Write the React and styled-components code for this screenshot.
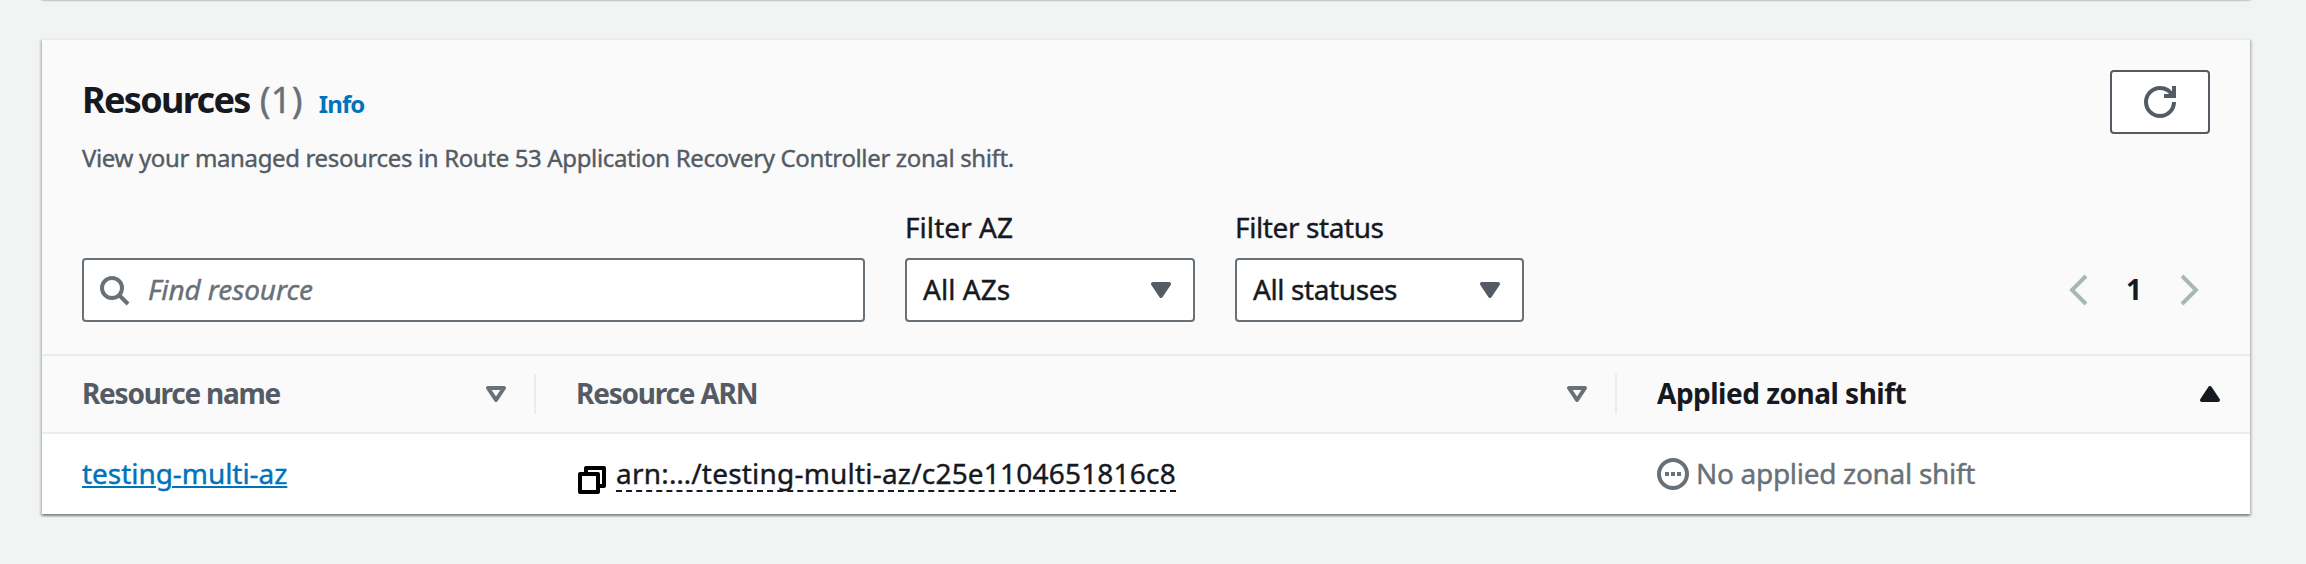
import React from "react";
import styled, { createGlobalStyle, css } from "styled-components";

const color = {
  page: "#f2f3f3",
  header: "#fafafa",
  surface: "#ffffff",
  divider: "#eaeded",
  text: "#16191f",
  textSecondary: "#545b64",
  textMuted: "#687078",
  link: "#0073bb",
  disabled: "#aab7b8",
};

const bold = css`
  font-weight: 700;
  -webkit-text-stroke-width: 0;
`;

const GlobalStyle = createGlobalStyle`
  *, *::before, *::after { box-sizing: border-box; }
  body {
    margin: 0;
    overflow: hidden;
    background: ${color.page};
    color: ${color.text};
    font-family: "Noto Sans", "Open Sans", sans-serif;
    font-size: 28px;
    line-height: 44px;
    -webkit-text-stroke-width: 0.4px;
  }
`;

const Page = styled.main`
  display: flex;
  flex-direction: column;
  gap: 40px;
  height: 564px;
  padding: 0 56px 0 42px;
  overflow: hidden;
`;

const Panel = styled.section`
  background: ${color.surface};
  border-top: 2px solid ${color.divider};
  box-shadow:
    0 2px 2px 0 rgba(0, 28, 36, 0.3),
    2px 2px 2px 0 rgba(0, 28, 36, 0.15),
    -2px 2px 2px 0 rgba(0, 28, 36, 0.15);
`;

const PreviousPanel = styled(Panel)`
  flex: none;
  height: 20px;
  margin-top: -22px;
`;

const PanelHeader = styled.header`
  height: 314px;
  padding: 30px 40px 0;
  background: ${color.header};
`;

const TitleBar = styled.div`
  display: flex;
  justify-content: space-between;
  align-items: flex-start;
  height: 135px;
`;

const Heading = styled.div`
  padding-top: 8px;
`;

const TitleLine = styled.div`
  display: flex;
  align-items: baseline;
  height: 44px;
  white-space: nowrap;
`;

const Title = styled.h2`
  ${bold}
  margin: 0;
  font-size: 36px;
  letter-spacing: -1.65px;
`;

const Counter = styled.span`
  margin-left: 10px;
  color: ${color.textMuted};
  font-size: 36px;
  letter-spacing: 0.3px;
`;

const InfoLink = styled.a`
  ${bold}
  margin-left: 16px;
  color: ${color.link};
  font-size: 24px;
  letter-spacing: -0.9px;
`;

const Description = styled.p`
  margin: 18px 0 0;
  color: ${color.textSecondary};
  font-size: 24px;
  line-height: 36px;
  letter-spacing: -0.36px;
`;

const RefreshButton = styled.button`
  display: flex;
  align-items: center;
  justify-content: center;
  width: 100px;
  height: 64px;
  padding: 0;
  border: 2px solid ${color.textSecondary};
  border-radius: 4px;
  background: ${color.surface};
  color: ${color.textSecondary};
`;

const Filters = styled.div`
  display: flex;
  align-items: flex-end;
  gap: 40px;
`;

const Control = styled.div`
  display: flex;
  align-items: center;
  width: ${({ $width }) => $width}px;
  height: 64px;
  padding: 0 16px 0 ${({ $padLeft }) => $padLeft || 14}px;
  border: 2px solid ${color.textMuted};
  border-radius: 4px;
  background: ${color.surface};
  color: ${({ $muted }) => ($muted ? color.textMuted : color.text)};
`;

const Placeholder = styled.span`
  margin-left: 18px;
  padding-bottom: 2px;
  font-style: italic;
  letter-spacing: -0.1px;
`;

const Field = styled.div`
  display: flex;
  flex-direction: column;
  gap: 9px;
  letter-spacing: ${({ $tracking }) => $tracking}px;
`;

const Label = styled.label`
  display: block;
`;

const Value = styled.span`
  flex: 1;
  padding-bottom: 2px;
`;

const Pagination = styled.nav`
  display: flex;
  align-items: center;
  justify-content: space-between;
  width: 144px;
  height: 64px;
  margin: 0 4px 0 auto;
  color: ${color.disabled};
`;

const PageNumber = styled.span`
  ${bold}
  padding-bottom: 2px;
  color: ${color.text};
`;

const Svg = styled.svg`
  display: block;
  flex: none;
  width: 32px;
  height: 32px;
  fill: none;
  stroke: currentColor;
  stroke-width: 2;
`;

const Caret = styled(Svg)`
  color: ${({ $tone }) => $tone};
  fill: ${({ $solid }) => ($solid ? "currentColor" : "none")};
  stroke-linejoin: round;
`;

const Row = styled.div`
  display: grid;
  grid-template-columns: 494px 1081px 1fr;
`;

const HeaderRow = styled(Row)`
  height: 80px;
  border: solid ${color.divider};
  border-width: 2px 0;
  background: ${color.header};
`;

const ColumnHeader = styled.div`
  ${bold}
  display: flex;
  align-items: center;
  justify-content: space-between;
  height: 40px;
  margin: 18px 0;
  padding: 0 ${({ $last }) => ($last ? 24 : 22)}px 0 40px;
  border-right: ${({ $last }) => ($last ? "0" : `2px solid ${color.divider}`)};
  color: ${({ $sorted }) => ($sorted ? color.text : color.textSecondary)};
`;

const ColumnTitle = styled.span`
  padding-bottom: 2px;
  letter-spacing: ${({ $tracking }) => $tracking}px;
`;

const BodyRow = styled(Row)`
  height: 80px;
`;

const Cell = styled.div`
  display: flex;
  align-items: center;
  padding-left: 40px;
  white-space: nowrap;
`;

const ResourceLink = styled.a`
  padding-bottom: 2px;
  color: ${color.link};
  letter-spacing: -0.05px;
  text-decoration: underline;
  text-decoration-thickness: 2px;
  text-underline-offset: 2px;
`;

const CopyIcon = styled(Svg)`
  margin: 12px 8px 0 0;
  color: #000;
  stroke-linejoin: round;
`;

const Arn = styled.span`
  height: 38px;
  margin-bottom: 2px;
  border-bottom: 2px dashed ${color.text};
  line-height: 38px;
  letter-spacing: 0.2px;
`;

const Status = styled.span`
  display: flex;
  align-items: center;
  gap: 7px;
  color: ${color.textMuted};
`;

const StatusText = styled.span`
  padding-bottom: 2px;
  letter-spacing: -0.3px;
`;

const DOWN = "M4 5h8l-4 6-4-6z";
const UP = "M4 11h8L8 5l-4 6z";

function Select({ label, value, width, tracking }) {
  return (
    <Field $tracking={tracking}>
      <Label>{label}</Label>
      <Control $width={width} $padLeft={16}>
        <Value>{value}</Value>
        <Caret viewBox="0 0 16 16" $solid $tone={color.textSecondary}>
          <path d={DOWN} />
        </Caret>
      </Control>
    </Field>
  );
}

function SortableColumn({ title, tracking, sorted, last }) {
  return (
    <ColumnHeader $sorted={sorted} $last={last}>
      <ColumnTitle $tracking={tracking}>{title}</ColumnTitle>
      <Caret viewBox="0 0 16 16" $solid={sorted} $tone={sorted ? color.text : color.textMuted}>
        <path d={sorted ? UP : DOWN} />
      </Caret>
    </ColumnHeader>
  );
}

export default function App() {
  return (
    <>
      <GlobalStyle />
      <Page>
        <PreviousPanel />
        <Panel>
          <PanelHeader>
            <TitleBar>
              <Heading>
                <TitleLine>
                  <Title>Resources</Title>
                  <Counter>(1)</Counter>
                  <InfoLink>Info</InfoLink>
                </TitleLine>
                <Description>
                  View your managed resources in Route 53 Application Recovery Controller zonal shift.
                </Description>
              </Heading>
              <RefreshButton aria-label="Refresh">
                <Svg viewBox="0 0 16 16">
                  <path d="M10 5h5V0" />
                  <path d="M15 8c0 3.87-3.13 7-7 7s-7-3.13-7-7 3.13-7 7-7c2.79 0 5.2 1.63 6.33 4" />
                </Svg>
              </RefreshButton>
            </TitleBar>
            <Filters>
              <Control $width={783} $muted>
                <Svg viewBox="0 0 16 16">
                  <circle cx="7" cy="7" r="5" />
                  <path d="m15 15-4.5-4.5" />
                </Svg>
                <Placeholder>Find resource</Placeholder>
              </Control>
              <Select label="Filter AZ" value="All AZs" width={290} tracking={0.05} />
              <Select label="Filter status" value="All statuses" width={289} tracking={-0.4} />
              <Pagination>
                <Svg viewBox="0 0 16 16">
                  <path d="M12 1 5 8l7 7" />
                </Svg>
                <PageNumber>1</PageNumber>
                <Svg viewBox="0 0 16 16">
                  <path d="m4 1 7 7-7 7" />
                </Svg>
              </Pagination>
            </Filters>
          </PanelHeader>
          <HeaderRow>
            <SortableColumn title="Resource name" tracking={-1.25} />
            <SortableColumn title="Resource ARN" tracking={-1.2} />
            <SortableColumn title="Applied zonal shift" tracking={-0.5} sorted last />
          </HeaderRow>
          <BodyRow>
            <Cell>
              <ResourceLink>testing-multi-az</ResourceLink>
            </Cell>
            <Cell>
              <CopyIcon viewBox="0 0 16 16">
                <path d="M2 5h9v9H2zM5 5V2h9v9h-3" />
              </CopyIcon>
              <Arn>arn:…/testing-multi-az/c25e1104651816c8</Arn>
            </Cell>
            <Cell>
              <Status>
                <Svg viewBox="0 0 16 16">
                  <circle cx="8" cy="8" r="7" />
                  <path d="M4 8h2M7 8h2M10 8h2" />
                </Svg>
                <StatusText>No applied zonal shift</StatusText>
              </Status>
            </Cell>
          </BodyRow>
        </Panel>
      </Page>
    </>
  );
}
